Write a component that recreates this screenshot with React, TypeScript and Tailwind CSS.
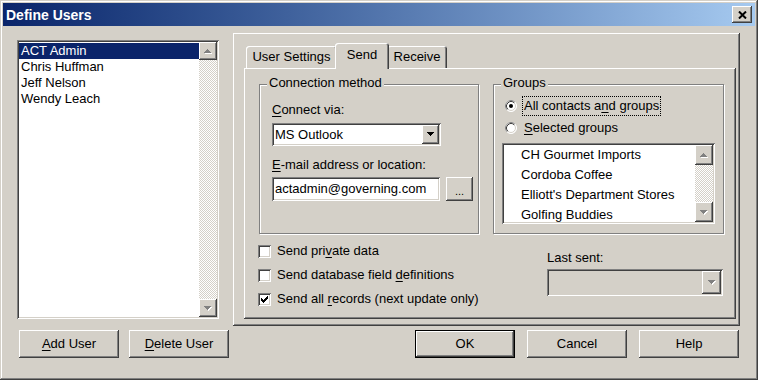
import { type ReactNode } from "react";

// win2000 bevels
const raised =
  "shadow-[inset_-1px_-1px_0_#404040,inset_1px_1px_0_#fff,inset_-2px_-2px_0_#808080]";
const sunken =
  "shadow-[inset_1px_1px_0_#808080,inset_-1px_-1px_0_#fff,inset_2px_2px_0_#404040,inset_-2px_-2px_0_#d4d0c8]";
const etched = "border border-[#808080] shadow-[inset_1px_1px_0_#fff,1px_1px_0_#fff]";

const users = ["ACT Admin", "Chris Huffman", "Jeff Nelson", "Wendy Leach"];
const groups = [
  "CH Gourmet Imports",
  "Cordoba Coffee",
  "Elliott's Department Stores",
  "Golfing Buddies",
];

function U({ children }: { children: ReactNode }) {
  return <span className="underline underline-offset-[2px]">{children}</span>;
}

function Arrow({ dir, gray = false }: { dir: "up" | "down"; gray?: boolean }) {
  const d =
    dir === "down"
      ? "M0 0h7v1h-1v1h-1v1h-1v1h-1v-1h-1v-1h-1v-1h-1z"
      : "M3 0h1v1h1v1h1v1h1v1H0v-1h1v-1h1v-1h1z";
  return (
    <svg width="8" height="5" viewBox="0 0 8 5" shapeRendering="crispEdges" aria-hidden="true">
      {gray && <path d={d} fill="#fff" transform="translate(1 1)" />}
      <path d={d} fill={gray ? "#808080" : "#000"} />
    </svg>
  );
}

function ScrollBar({ btn }: { btn: number }) {
  const style = { height: btn };
  return (
    <div className="flex w-[18px] flex-col">
      <div style={style} className={`grid place-items-center bg-[#d4d0c8] ${raised}`}>
        <Arrow dir="up" gray />
      </div>
      <div className="flex-1 bg-[image:repeating-conic-gradient(#d4d0c8_0%_25%,#fff_0%_50%)] bg-[length:2px_2px]" />
      <div style={style} className={`grid place-items-center bg-[#d4d0c8] ${raised}`}>
        <Arrow dir="down" gray />
      </div>
    </div>
  );
}

function Combo({
  value,
  disabled = false,
  className,
  btn = "w-[17px]",
}: {
  value?: string;
  disabled?: boolean;
  className: string;
  btn?: string;
}) {
  return (
    <div className={`flex p-[2px] ${sunken} ${disabled ? "bg-[#d4d0c8]" : "bg-white"} ${className}`}>
      <div className="flex flex-1 items-center pl-[1px]">{value}</div>
      <div className={`grid place-items-center bg-[#d4d0c8] ${raised} ${btn}`}>
        <Arrow dir="down" gray={disabled} />
      </div>
    </div>
  );
}

function Button({ children, def = false }: { children: ReactNode; def?: boolean }) {
  return (
    <div
      className={`flex h-[28px] w-[100px] items-center justify-center bg-[#d4d0c8] ${raised} ${
        def ? "border border-black" : ""
      }`}
    >
      {children}
    </div>
  );
}

function CheckBox({ checked = false }: { checked?: boolean }) {
  const rows = [
    [6, 0, 1],
    [5, 1, 2],
    [0, 2, 1],
    [4, 2, 3],
    [0, 3, 2],
    [3, 3, 3],
    [0, 4, 5],
    [1, 5, 3],
    [2, 6, 1],
  ];
  return (
    <span className={`grid h-[13px] w-[13px] shrink-0 place-items-center bg-white ${sunken}`}>
      {checked && (
        <svg width="7" height="7" viewBox="0 0 7 7" shapeRendering="crispEdges" aria-hidden="true">
          {rows.map(([x, y, w]) => (
            <rect key={`${x}-${y}`} x={x} y={y} width={w} height="1" fill="#000" />
          ))}
        </svg>
      )}
    </span>
  );
}

function Radio({ checked = false }: { checked?: boolean }) {
  return (
    <svg width="12" height="12" viewBox="0 0 12 12" className="shrink-0" aria-hidden="true">
      <circle cx="6" cy="6" r="5.5" fill="#fff" stroke="#fff" />
      <path d="M2.11 9.89 A5.5 5.5 0 0 1 9.89 2.11" fill="none" stroke="#808080" />
      <circle cx="6" cy="6" r="4.5" fill="#fff" stroke="#d4d0c8" />
      <path d="M2.82 9.18 A4.5 4.5 0 0 1 9.18 2.82" fill="none" stroke="#404040" />
      {checked && <circle cx="6" cy="6" r="2" fill="#000" />}
    </svg>
  );
}

function GroupBox({
  label,
  className,
  children,
}: {
  label: string;
  className: string;
  children: ReactNode;
}) {
  return (
    <div className={`relative ${etched} ${className}`}>
      <span className="absolute -top-[10px] left-[7px] bg-[#d4d0c8] px-[2px]">{label}</span>
      {children}
    </div>
  );
}

function Tab({ label, active = false }: { label: string; active?: boolean }) {
  return (
    <div
      className={`flex items-center justify-center rounded-t-[3px] bg-[#d4d0c8] shadow-[inset_1px_1px_0_#fff,inset_-1px_0_0_#404040,inset_-2px_0_0_#808080] ${
        active ? "relative z-10 -mx-[2px] -mb-[1px] h-[26px] w-[54px] pb-[2px]" : "h-[22px]"
      } ${label === "User Settings" ? "w-[91px]" : ""} ${label === "Receive" ? "w-[60px]" : ""}`}
    >
      {label}
    </div>
  );
}

function SendPage() {
  return (
    <div className={`flex flex-1 flex-col pl-[15px] pt-[16px] ${raised}`}>
      <div className="flex gap-[14px]">
        <GroupBox label="Connection method" className="flex h-[150px] w-[220px] flex-col pl-[12px] pt-[17px]">
          <div>
            <U>C</U>onnect via:
          </div>
          <Combo value="MS Outlook" className="mt-[5px] h-[23px] w-[169px]" />
          <div className="mt-[11px]">
            <U>E</U>-mail address or location:
          </div>
          <div className="mt-[4px] flex">
            <div className={`flex h-[24px] w-[168px] items-center bg-white pl-[3px] ${sunken}`}>
              actadmin@governing.com
            </div>
            <div className={`ml-[6px] flex h-[24px] w-[27px] items-end justify-center pb-[4px] text-[11px] leading-[11px] ${raised}`}>
              ...
            </div>
          </div>
        </GroupBox>

        <GroupBox label="Groups" className="flex h-[150px] w-[231px] flex-col pt-[10px]">
          <div className="flex h-[22px] items-center pl-[11px]">
            <Radio checked />
            <span className="ml-[5px] border border-dotted border-black px-[1px] py-[1px]">
              All contacts a<U>n</U>d groups
            </span>
          </div>
          <div className="flex h-[22px] items-center pl-[11px]">
            <Radio />
            <span className="ml-[5px] border border-transparent px-[1px]">
              <U>S</U>elected groups
            </span>
          </div>
          <div className={`ml-[8px] mt-[4px] flex h-[81px] w-[213px] bg-white p-[2px] ${sunken}`}>
            <div className="flex-1 pl-[17px]">
              {groups.map((g) => (
                <div key={g} className="h-[20px] leading-[20px]">
                  {g}
                </div>
              ))}
            </div>
            <ScrollBar btn={20} />
          </div>
        </GroupBox>
      </div>

      <div className="-ml-[1px] mt-[5px] flex">
        <div className="flex w-[289px] flex-col">
          <div className="flex h-[24px] items-center gap-[6px]">
            <CheckBox />
            <span>
              Send pri<U>v</U>ate data
            </span>
          </div>
          <div className="flex h-[24px] items-center gap-[6px]">
            <CheckBox />
            <span>
              Send database field <U>d</U>efinitions
            </span>
          </div>
          <div className="flex h-[24px] items-center gap-[6px]">
            <CheckBox checked />
            <span>
              Send all <U>r</U>ecords (next update only)
            </span>
          </div>
        </div>
        <div className="flex w-[176px] flex-col pt-[11px]">
          <div>Last sent:</div>
          <Combo disabled className="mt-[3px] h-[27px] w-[176px]" btn="w-[19px]" />
        </div>
      </div>
    </div>
  );
}

export default function App() {
  return (
    <div className="flex h-[380px] w-[758px] flex-col bg-[#d4d0c8] p-[3px] font-['Liberation_Sans',Arial,sans-serif] text-[13px] leading-[16px] text-black shadow-[inset_-1px_-1px_0_#404040,inset_1px_1px_0_#d4d0c8,inset_-2px_-2px_0_#808080,inset_2px_2px_0_#fff]">
      <div className="flex h-[23px] items-center justify-between bg-linear-to-r from-[#0a246a] to-[#a6caf0] pl-[3px] pr-[3px]">
        <span className="text-[14px] font-bold text-white">Define Users</span>
        <div className={`grid h-[17px] w-[20px] place-items-center bg-[#d4d0c8] ${raised}`}>
          <svg width="9" height="8" viewBox="0 0 9 8" aria-hidden="true">
            <path d="M1 0.5 L8 7.5 M8 0.5 L1 7.5" stroke="#000" strokeWidth="2" />
          </svg>
        </div>
      </div>

      <div className="mt-[7px] flex items-start">
        <div className={`ml-[14px] mt-[7px] flex h-[279px] w-[202px] bg-white p-[2px] ${sunken}`}>
          <div className="flex-1 pt-[1px]">
            {users.map((u, i) => (
              <div key={u} className={`h-[16px] pl-[2px] ${i === 0 ? "bg-[#0a246a] text-white" : ""}`}>
                {u}
              </div>
            ))}
          </div>
          <ScrollBar btn={18} />
        </div>

        <div className={`ml-[14px] flex h-[293px] w-[507px] flex-col pb-[7px] pl-[11px] pr-[4px] pt-[10px] ${raised}`}>
          <div className="flex h-[25px] items-end pl-[2px]">
            <Tab label="User Settings" />
            <Tab label="Send" active />
            <Tab label="Receive" />
          </div>
          <SendPage />
        </div>
      </div>

      <div className="mt-[4px] flex justify-between px-[16px]">
        <div className="flex gap-[10px]">
          <Button>
            <U>A</U>dd User
          </Button>
          <Button>
            <U>D</U>elete User
          </Button>
        </div>
        <div className="flex gap-[12px]">
          <Button def>OK</Button>
          <Button>Cancel</Button>
          <Button>Help</Button>
        </div>
      </div>
    </div>
  );
}
